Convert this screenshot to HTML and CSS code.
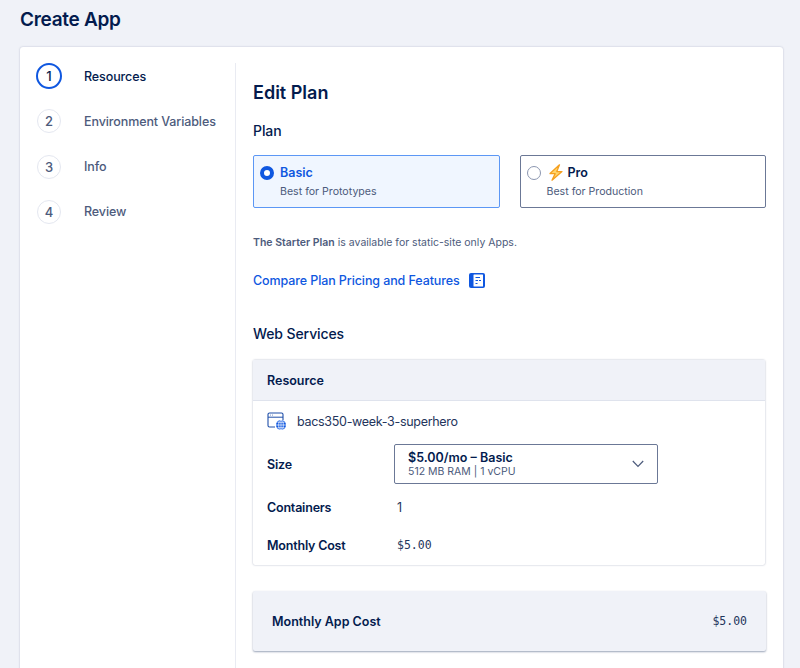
FILE: index.html
```html
<!DOCTYPE html>
<html lang="en">
<head>
<meta charset="utf-8">
<title>Create App</title>
<link rel="stylesheet" href="styles.css">
</head>
<body>
<div class="page">
  <h1 class="page-title">Create App</h1>
  <div class="card">
    <nav class="steps">
      <div class="step step-active"><span class="step-num">1</span><span class="step-label">Resources</span></div>
      <div class="step"><span class="step-num">2</span><span class="step-label">Environment Variables</span></div>
      <div class="step"><span class="step-num">3</span><span class="step-label">Info</span></div>
      <div class="step"><span class="step-num">4</span><span class="step-label">Review</span></div>
    </nav>
    <main class="content">
      <h2 class="edit-title">Edit Plan</h2>
      <h3 class="section-title">Plan</h3>
      <div class="plans">
        <div class="plan plan-selected">
          <div class="plan-head"><span class="radio radio-on"></span><span class="plan-name">Basic</span></div>
          <div class="plan-desc">Best for Prototypes</div>
        </div>
        <div class="plan">
          <div class="plan-head"><span class="radio"></span>
            <svg class="bolt" width="16" height="17" viewBox="0 0 16 17"><path d="M11.5 .8 2 9.6h5.2L4 16.2l10-8.6H8.8z" fill="#ffd56b" stroke="#f5a020" stroke-width="1.300" stroke-linejoin="round"/></svg>
            <span class="plan-name">Pro</span></div>
          <div class="plan-desc">Best for Production</div>
        </div>
      </div>
      <p class="note"><b>The Starter Plan</b> is available for static-site only Apps.</p>
      <a class="compare" href="#">Compare Plan Pricing and Features
        <svg width="16" height="15" viewBox="0 0 16 15"><rect width="16" height="15" rx="2" fill="#0f57e0"/><rect x="4.500" y="1.500" width="9.500" height="12" rx=".5" fill="#fff"/><path d="M6.500 4.500h4.500M6.500 7.500h2.500M10 7.500h2M6.500 10.500h2" stroke="#0f57e0" stroke-width="1.100"/></svg>
      </a>
      <h3 class="section-title services-title">Web Services</h3>
      <section class="resource">
        <div class="resource-head">Resource</div>
        <div class="resource-body">
          <div class="service">
            <svg width="20" height="19" viewBox="0 0 20 19" fill="none"><path d="M8 15H2.500A1.500 1.500 0 0 1 1 13.500v-11A1.500 1.500 0 0 1 2.500 1h12A1.500 1.500 0 0 1 16 2.500V8" stroke="#1f4fa8" stroke-width="1.100"/><path d="M1 5.200h15" stroke="#1f4fa8" stroke-width="1"/><path d="M3 3.100h.8M5 3.100h.8" stroke="#5c7cc0"/><circle cx="14" cy="13" r="5" fill="#0f57e0"/><path d="M9 13h10M14 8v10M10.500 10.300h7M10.500 15.700h7" stroke="#fff" stroke-width=".7"/><ellipse cx="14" cy="13" rx="2.300" ry="5" stroke="#fff" stroke-width=".7"/></svg>
            <span>bacs350-week-3-superhero</span>
          </div>
          <div class="row row-size">
            <span class="row-label">Size</span>
            <div class="select">
              <div>
                <div class="select-main">$5.00/mo – Basic</div>
                <div class="select-sub">512 MB RAM | 1 vCPU</div>
              </div>
              <svg width="12" height="8" viewBox="0 0 12 8" fill="none"><path d="M.8 1 6 6.500 11.200 1" stroke="#4d5b7c" stroke-width="1.200"/></svg>
            </div>
          </div>
          <div class="row row-containers"><span class="row-label">Containers</span><span class="row-value">1</span></div>
          <div class="row row-cost"><span class="row-label">Monthly Cost</span><span class="row-value mono">$5.00</span></div>
        </div>
      </section>
      <div class="total"><span class="total-label">Monthly App Cost</span><span class="mono">$5.00</span></div>
    </main>
  </div>
</div>
</body>
</html>
```
FILE: styles.css
```css
* { box-sizing: border-box; }
html, body { margin: 0; height: 100%; overflow: hidden; }
body { background: #f0f2f8; color: #031b4e; font-family: Inter, "Liberation Sans", sans-serif; }
.page { padding: 0 17px 0 20px; height: 668px; overflow: hidden; }
.page-title { margin: 0; height: 47px; padding-top: 7px; font-size: 19px; line-height: 26px; font-weight: 600; letter-spacing: -.3px; }
.card { display: flex; height: 640px; background: #fff; border-radius: 3px 3px 0 0; box-shadow: 0 0 2px rgba(3,27,78,.25); padding-top: 16px; }
.steps { width: 216px; border-right: 1px solid #e9ebf2; padding-left: 16px; flex: none; }
.step { display: flex; align-items: center; height: 26px; margin-bottom: 19.300px; font-size: 12.500px; font-weight: 500; color: #4d5b7c; }
.step-num { width: 24px; height: 24px; margin: 0 23px 0 1px; border: 1px solid #e4e7f0; border-radius: 50%; display: flex; align-items: center; justify-content: center; font-size: 13px; }
.step-active { color: #031b4e; }
.step-active .step-num { width: 26px; height: 26px; margin: 0 22px 0 0; border: 2px solid #0f57e0; }
.step-label { letter-spacing: -.1px; }
.content { width: 513px; margin-left: 17px; padding-top: 16px; flex: none; }
.edit-title { margin: 0; font-size: 18px; line-height: 24px; font-weight: 600; padding-top: 2px; height: 42px; }
.section-title { margin: 0; font-size: 14px; line-height: 20px; font-weight: 500; height: 34px; letter-spacing: -.1px; }
.plans { display: flex; gap: 20px; }
.plan { flex: 1; height: 53px; border: 1px solid #6b7896; border-radius: 2px; padding: 8px 6px 0; }
.plan-selected { background: #f0f6ff; border-color: #5c97f5; }
.plan-head { display: flex; align-items: center; height: 17px; gap: 6px; }
.plan:not(.plan-selected) .plan-head { gap: 0; }
.plan-selected .plan-name { color: #0f57e0; }
.plan-name { font-size: 12.500px; font-weight: 600; }
.radio { width: 14px; height: 14px; border-radius: 50%; border: 1px solid #8b96b0; background: #fff; flex: none; }
.radio-on { border: 4px solid #0f57e0; }
.bolt { margin: 0 4px 0 7px; }
.plan-desc { margin: 3px 0 0 20px; font-size: 10.600px; line-height: 15px; color: #4d5b7c; }
.note { margin: 28px 0 0; font-size: 10.500px; line-height: 14px; color: #4d5b7c; }
.note b { font-weight: 600; }
.compare { display: flex; align-items: center; gap: 9px; margin-top: 22px; height: 16px; font-size: 12.500px; font-weight: 500; letter-spacing: -.1px; color: #0f57e0; text-decoration: none; }
.services-title { margin-top: 36px; height: 36px; }
.resource { height: 205px; border-radius: 2px; box-shadow: 0 0 2px rgba(3,27,78,.35); margin-right: 1px; }
.resource-head { height: 41px; background: #f0f2f8; border-bottom: 1px solid #dfe3ed; padding: 0 14px; display: flex; align-items: center; font-size: 12.500px; font-weight: 600; }
.resource-body { padding: 0 14px; font-size: 12.500px; }
.service { display: flex; align-items: center; gap: 10px; height: 40px; color: #24355c; letter-spacing: -.3px; }
.row { display: flex; align-items: center; }
.row-label { font-weight: 600; width: 127px; flex: none; letter-spacing: -.2px; }
.row-size { height: 40px; margin-top: 3px; }
.row-containers { height: 39px; margin-top: 4px; }
.row-cost { height: 38px; margin-top: -1px; }
.row-value { color: #24355c; padding-left: 3px; }
.select { width: 264px; height: 40px; border: 1px solid #6b7896; border-radius: 2px; padding: 0 13px; display: flex; align-items: center; justify-content: space-between; letter-spacing: 0; }
.select-main { font-size: 12.500px; line-height: 15px; font-weight: 600; }
.select-sub { font-size: 10.500px; line-height: 13px; color: #4d5b7c; }
.mono { font-family: "DejaVu Sans Mono", monospace; font-size: 11.500px; }
.total { margin-top: 26px; height: 60px; background: #f0f2f8; border-radius: 2px; box-shadow: 0 1px 2px rgba(3,27,78,.4); padding: 0 19px; display: flex; align-items: center; justify-content: space-between; font-size: 12.500px; font-weight: 600; }
.total .mono { font-weight: 400; color: #24355c; }
```
